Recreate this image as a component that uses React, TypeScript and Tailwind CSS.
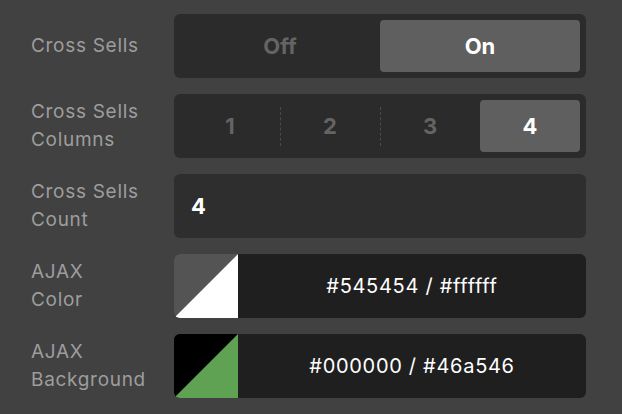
const Label = ({ children }: { children: React.ReactNode }) => (
  <div className="w-[143px] shrink-0 text-[19px] leading-[28px] tracking-[0.7px] text-[#9d9d9d]">{children}</div>
);

const Segmented = ({ options, active, dashed }: { options: string[]; active: number; dashed?: boolean }) => (
  <div className="flex h-16 w-[412px] rounded-md bg-[#2b2b2b] p-1.5">
    {options.map((opt, i) => {
      const on = i === active;
      const showDivider = dashed && i > 0 && i !== active && i - 1 !== active;
      return (
        <div key={opt} className="relative flex flex-1 items-center justify-center">
          {showDivider && (
            <div className="absolute left-0 top-[7px] bottom-[6px] border-l border-dashed border-[#4a4a4a]" />
          )}
          <div
            className={
              on
                ? "flex h-full w-full items-center justify-center rounded-[4px] bg-[#5f5f5f] text-[22px] font-bold text-white"
                : "flex h-full w-full items-center justify-center text-[22px] font-bold text-[#646464]"
            }
          >
            {opt}
          </div>
        </div>
      );
    })}
  </div>
);

const ColorField = ({ a, b, swatchA, swatchB }: { a: string; b: string; swatchA: string; swatchB: string }) => (
  <div className="flex h-16 w-[412px] overflow-hidden rounded-md bg-[#1f1f1f]">
    <svg width="64" height="64" viewBox="0 0 64 64" className="shrink-0">
      <polygon points="0,0 64,0 0,64" fill={swatchA} />
      <polygon points="64,0 64,64 0,64" fill={swatchB} />
    </svg>
    <div className="flex flex-1 items-center justify-center text-[20px] tracking-[0.7px] text-white">
      {a} / {b}
    </div>
  </div>
);

export default function App() {
  return (
    <div
      className="h-[414px] w-[622px] bg-[#414141] pl-[31px] pt-[14px]"
      style={{ fontFamily: "Inter, 'Liberation Sans', sans-serif" }}
    >
      <div className="flex flex-col gap-4">
        <div className="flex items-center">
          <Label>Cross Sells</Label>
          <Segmented options={["Off", "On"]} active={1} />
        </div>
        <div className="flex items-center">
          <Label>
            Cross Sells
            <br />
            Columns
          </Label>
          <Segmented options={["1", "2", "3", "4"]} active={3} dashed />
        </div>
        <div className="flex items-center">
          <Label>
            Cross Sells
            <br />
            Count
          </Label>
          <div className="flex h-16 w-[412px] items-center rounded-md bg-[#2e2e2e] px-[17px] text-[22px] font-bold text-white">
            4
          </div>
        </div>
        <div className="flex items-center">
          <Label>
            AJAX
            <br />
            Color
          </Label>
          <ColorField a="#545454" b="#ffffff" swatchA="#545454" swatchB="#ffffff" />
        </div>
        <div className="flex items-center">
          <Label>
            AJAX
            <br />
            Background
          </Label>
          <ColorField a="#000000" b="#46a546" swatchA="#000000" swatchB="#5fa253" />
        </div>
      </div>
    </div>
  );
}
